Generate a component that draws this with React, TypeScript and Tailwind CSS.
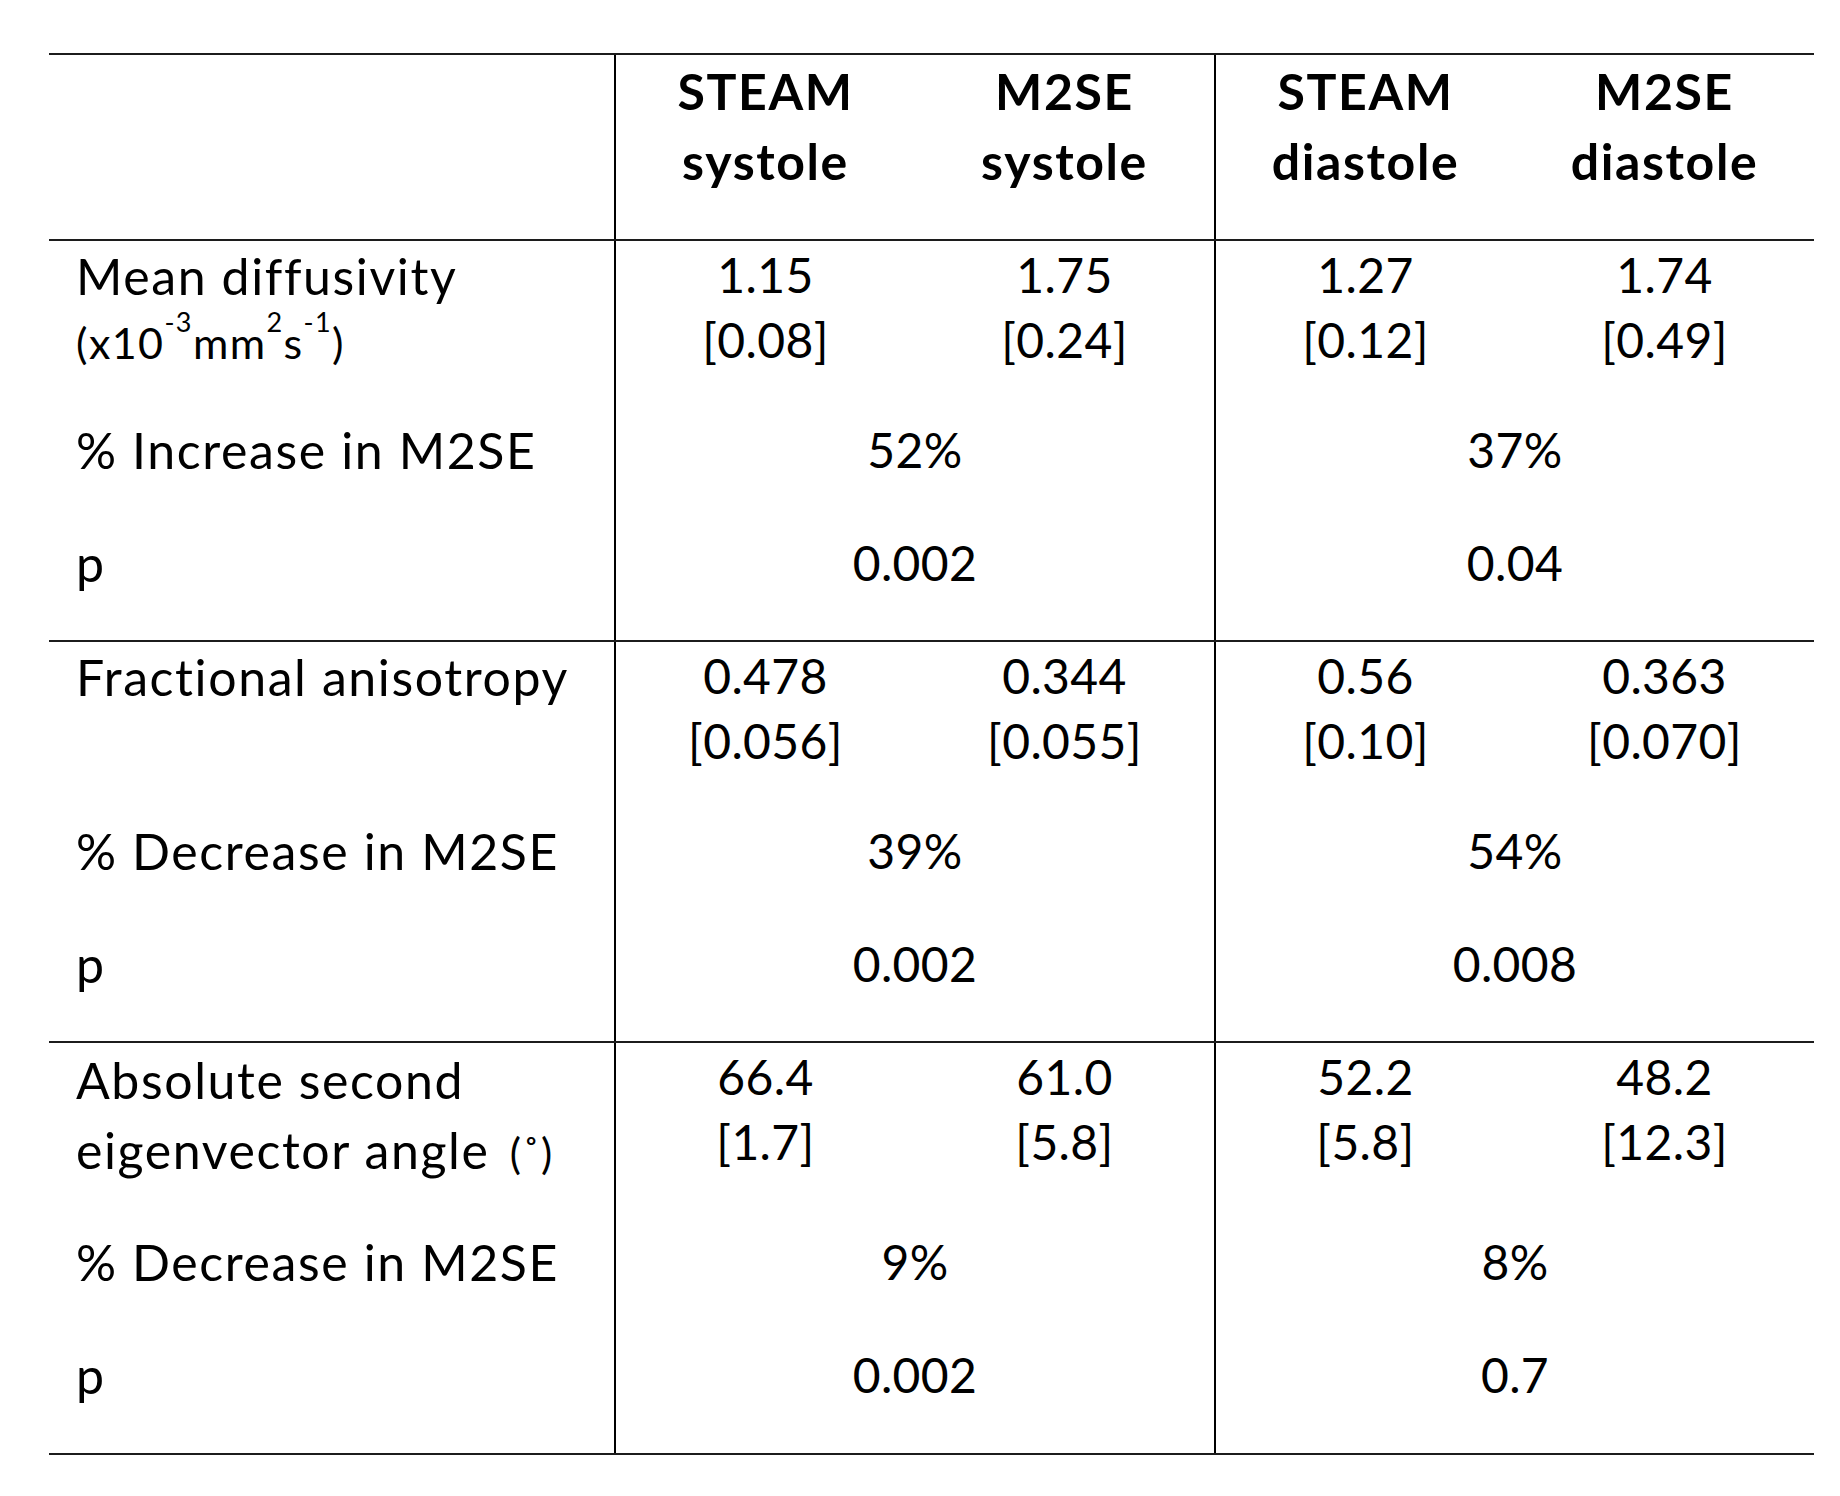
import React from "react";

type Section = {
  label: React.ReactNode;
  vals: [string, string][];
  change: string;
  c: [string, string];
  p: [string, string];
  tall: boolean;
  last: boolean;
};

const sections: Section[] = [
  {
    label: (
      <>
        <div className="leading-[66px]">Mean diffusivity</div>
        <div className="mt-[6px] text-[43px] leading-[56px] tracking-[1.4px]">
          (x10<sup className="text-[27px] leading-none align-[14px]">-3</sup>mm
          <sup className="text-[27px] leading-none align-[14px]">2</sup>s
          <sup className="text-[27px] leading-none align-[14px]">-1</sup>)
        </div>
      </>
    ),
    vals: [
      ["1.15", "[0.08]"],
      ["1.75", "[0.24]"],
      ["1.27", "[0.12]"],
      ["1.74", "[0.49]"],
    ],
    change: "% Increase in M2SE",
    c: ["52%", "37%"],
    p: ["0.002", "0.04"],
    tall: false,
    last: false,
  },
  {
    label: <div className="leading-[66px]">Fractional anisotropy</div>,
    vals: [
      ["0.478", "[0.056]"],
      ["0.344", "[0.055]"],
      ["0.56", "[0.10]"],
      ["0.363", "[0.070]"],
    ],
    change: "% Decrease in M2SE",
    c: ["39%", "54%"],
    p: ["0.002", "0.008"],
    tall: false,
    last: false,
  },
  {
    label: (
      <div className="leading-[70px]">
        <div>Absolute second</div>
        <div>
          eigenvector angle <span className="ml-[6px] text-[42px]">(˚)</span>
        </div>
      </div>
    ),
    vals: [
      ["66.4", "[1.7]"],
      ["61.0", "[5.8]"],
      ["52.2", "[5.8]"],
      ["48.2", "[12.3]"],
    ],
    change: "% Decrease in M2SE",
    c: ["9%", "8%"],
    p: ["0.002", "0.7"],
    tall: true,
    last: true,
  },
];

function ValueCell({ v }: { v: [string, string] }) {
  return (
    <div className="w-1/2 text-center pt-[1px] leading-[65px] text-[48px] tracking-[0.4px]">
      <div>{v[0]}</div>
      <div>{v[1]}</div>
    </div>
  );
}

const labelCls = "w-[565px] pl-[27px] pt-[2px] text-[50px] tracking-[1.6px]";
const mergedCls =
  "w-[600px] border-l-2 border-black text-center pt-[2px] text-[48px] tracking-[0.4px]";

function SectionBlock({ s }: { s: Section }) {
  return (
    <div className={s.last ? "" : "border-b-2 border-[#1c1c1c]"}>
      <div className={"flex " + (s.tall ? "h-[184px]" : "h-[174px]")}>
        <div className={labelCls}>{s.label}</div>
        <div className="w-[600px] border-l-2 border-black flex">
          <ValueCell v={s.vals[0]} />
          <ValueCell v={s.vals[1]} />
        </div>
        <div className="w-[600px] border-l-2 border-black flex">
          <ValueCell v={s.vals[2]} />
          <ValueCell v={s.vals[3]} />
        </div>
      </div>
      <div className="flex h-[113px] leading-[66px]">
        <div className={labelCls}>{s.change}</div>
        <div className={mergedCls}>{s.c[0]}</div>
        <div className={mergedCls}>{s.c[1]}</div>
      </div>
      <div className={"flex leading-[66px] " + (s.last ? "h-[113px]" : "h-[112px]")}>
        <div className={labelCls}>p</div>
        <div className={mergedCls}>{s.p[0]}</div>
        <div className={mergedCls}>{s.p[1]}</div>
      </div>
    </div>
  );
}

function HeadCell({ a, b }: { a: string; b: string }) {
  return (
    <div className="w-1/2 text-center pt-[1px]">
      <div>{a}</div>
      <div>{b}</div>
    </div>
  );
}

export default function App() {
  return (
    <div className="w-[1840px] h-[1496px] bg-white pt-[53px] pl-[49px] text-black font-[Lato,'Liberation_Sans',sans-serif]">
      <div className="w-[1765px] border-t-2 border-b-2 border-[#1c1c1c]">
        <div className="flex h-[186px] border-b-2 border-[#1c1c1c]">
          <div className="w-[565px]" />
          <div className="w-[600px] border-l-2 border-black flex font-bold text-[50px] tracking-[1.6px] leading-[70px]">
            <HeadCell a="STEAM" b="systole" />
            <HeadCell a="M2SE" b="systole" />
          </div>
          <div className="w-[600px] border-l-2 border-black flex font-bold text-[50px] tracking-[1.6px] leading-[70px]">
            <HeadCell a="STEAM" b="diastole" />
            <HeadCell a="M2SE" b="diastole" />
          </div>
        </div>
        {sections.map((s, i) => (
          <SectionBlock key={i} s={s} />
        ))}
      </div>
    </div>
  );
}
